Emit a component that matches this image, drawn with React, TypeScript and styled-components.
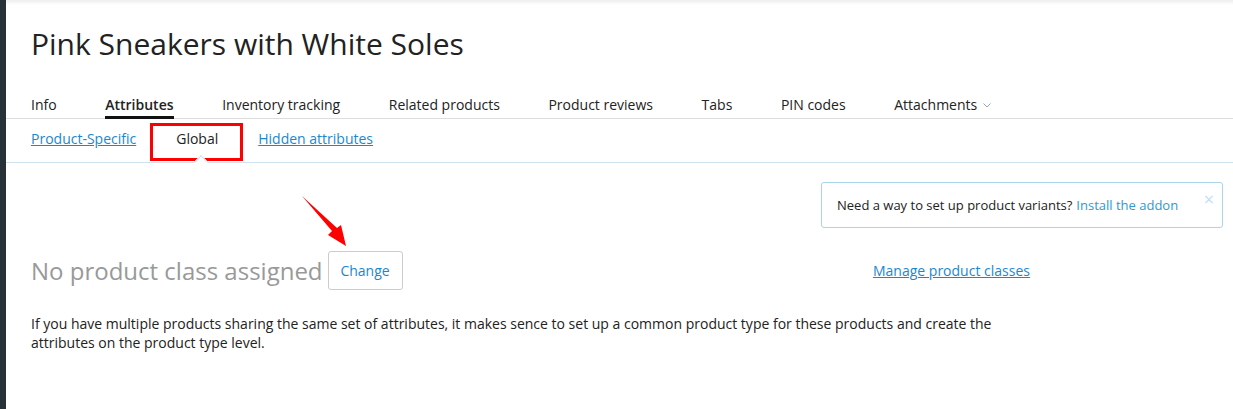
import React from "react";
import styled, { createGlobalStyle } from "styled-components";

const GlobalStyle = createGlobalStyle`
  html, body { margin: 0; padding: 0; background: #fff; }
  body { font-family: "Open Sans", "Noto Sans", sans-serif; color: #333; }
  * { box-sizing: border-box; }
`;

const Page = styled.div`
  display: flex;
  width: 1233px;
  height: 409px;
  overflow: hidden;
`;

const Sidebar = styled.div`
  width: 6px;
  flex: 0 0 6px;
  background: #263238;
`;

const Main = styled.div`
  flex: 1;
  position: relative;
  display: flex;
  flex-direction: column;
  background: linear-gradient(#eeeeee 0px, #ffffff 5px);
`;

const Header = styled.div`
  padding: 26px 0 0 25px;
`;

const Title = styled.h1`
  margin: 0;
  font-size: 30px;
  line-height: 36px;
  font-weight: 400;
  color: #222;
`;

const TabBar = styled.ul`
  list-style: none;
  margin: 33px 0 0 0;
  padding: 0 0 0 25px;
  display: flex;
  gap: 48.6px;
  border-bottom: 1px solid #dddddd;
`;

const Tab = styled.li<{ $active?: boolean }>`
  font-size: 14px;
  line-height: 20px;
  padding-bottom: 1px;
  margin-bottom: -1px;
  color: #222;
  font-weight: ${(p) => (p.$active ? 600 : 400)};
  border-bottom: 3px solid ${(p) => (p.$active ? "#111" : "transparent")};
  display: flex;
  align-items: center;
  gap: 6px;
`;

const SubTabBar = styled.div`
  display: flex;
  align-items: center;
  gap: 40px;
  height: 44px;
  padding: 0 0 4px 25px;
  border-bottom: 1px solid #cfe2ee;
`;

const SubLink = styled.a`
  font-size: 14px;
  color: #1b87cf;
  text-decoration: underline;
  cursor: pointer;
`;

const SubActive = styled.span`
  position: relative;
  font-size: 14px;
  color: #222;
  line-height: 20px;

  &::before {
    content: "";
    position: absolute;
    left: -26px;
    right: -25px;
    top: -6px;
    height: 32px;
    border: 3px solid #ff0000;
  }

  &::after {
    content: "";
    position: absolute;
    left: 50%;
    bottom: -18px;
    width: 9px;
    height: 9px;
    margin-left: -1px;
    background: #fff;
    border-left: 1px solid #cfe2ee;
    border-top: 1px solid #cfe2ee;
    transform: rotate(45deg);
  }
`;

const Content = styled.div`
  padding: 19px 10px 0 25px;
  display: flex;
  flex-direction: column;
`;

const Notice = styled.div`
  align-self: flex-end;
  position: relative;
  width: 402px;
  height: 46px;
  border: 1px solid #a9d5ea;
  border-radius: 3px;
  padding: 0 30px 0 15px;
  display: flex;
  align-items: center;
  font-size: 13px;
  color: #222;
`;

const NoticeLink = styled.a`
  color: #2a9ad8;
  margin-left: 4px;
  cursor: pointer;
`;

const Close = styled.span`
  position: absolute;
  right: 8px;
  top: 7px;
  color: #c3e1ef;
  font-size: 18px;
  line-height: 18px;
`;

const ClassRow = styled.div`
  display: grid;
  grid-template-columns: 842px auto;
  align-items: center;
  margin-top: 23px;
`;

const ClassGroup = styled.div`
  display: flex;
  align-items: center;
  gap: 5px;
`;

const NoClass = styled.span`
  font-size: 24px;
  color: #999;
  line-height: 30px;
`;

const ChangeButton = styled.button`
  font-family: inherit;
  font-size: 14px;
  color: #1b87cf;
  background: #fff;
  border: 1px solid #cccccc;
  border-radius: 3px;
  width: 75px;
  height: 39px;
  padding: 0;
  cursor: pointer;
`;

const ManageLink = styled.a`
  font-size: 14px;
  color: #1b87cf;
  text-decoration: underline;
  cursor: pointer;
`;

const Paragraph = styled.p`
  margin: 24px 0 0 0;
  max-width: 1000px;
  font-size: 14px;
  line-height: 19px;
  color: #222;
`;

const Arrow = styled.svg`
  position: absolute;
  left: 293px;
  top: 193px;
`;

export default function App() {
  return (
    <>
      <GlobalStyle />
      <Page>
        <Sidebar />
        <Main>
          <Header>
            <Title>Pink Sneakers with White Soles</Title>
          </Header>
          <TabBar>
            <Tab>Info</Tab>
            <Tab $active>Attributes</Tab>
            <Tab>Inventory tracking</Tab>
            <Tab>Related products</Tab>
            <Tab>Product reviews</Tab>
            <Tab>Tabs</Tab>
            <Tab>PIN codes</Tab>
            <Tab>
              Attachments
              <svg width="8" height="5" viewBox="0 0 8 5">
                <path d="M0.5 0.5 L4 4 L7.5 0.5" fill="none" stroke="#9aa5ab" strokeWidth="1" />
              </svg>
            </Tab>
          </TabBar>
          <SubTabBar>
            <SubLink>Product-Specific</SubLink>
            <SubActive>Global</SubActive>
            <SubLink>Hidden attributes</SubLink>
          </SubTabBar>
          <Content>
            <Notice>
              Need a way to set up product variants?
              <NoticeLink>Install the addon</NoticeLink>
              <Close>×</Close>
            </Notice>
            <ClassRow>
              <ClassGroup>
                <NoClass>No product class assigned</NoClass>
                <ChangeButton>Change</ChangeButton>
              </ClassGroup>
              <ManageLink>Manage product classes</ManageLink>
            </ClassRow>
            <Paragraph>
              If you have multiple products sharing the same set of attributes, it makes sence to set up a common
              product type for these products and create the attributes on the product type level.
            </Paragraph>
          </Content>
          <Arrow width="52" height="58" viewBox="0 0 52 58">
            <path d="M3 3 L33 38 L29 42 L47 53 L42 32 L38 35 Z" fill="#ff0000" />
          </Arrow>
        </Main>
      </Page>
    </>
  );
}
